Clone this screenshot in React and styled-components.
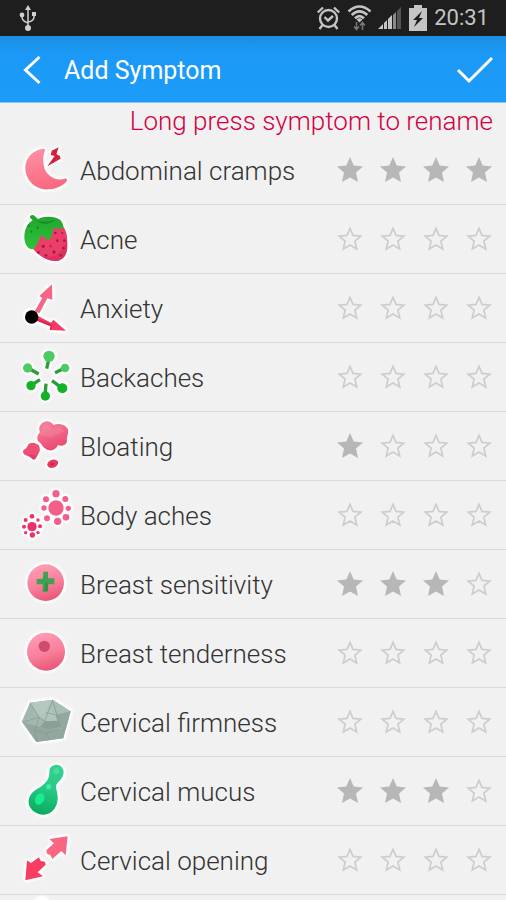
import React, { useState } from "react";
import styled, { createGlobalStyle } from "styled-components";

const GlobalStyle = createGlobalStyle`
  * { box-sizing: border-box; }
  body { margin: 0; background: #f1f1f1; font-family: Roboto, sans-serif; }
`;

const Screen = styled.div`
  display: flex;
  flex-direction: column;
  height: 100vh;
  overflow: hidden;
  background: #f1f1f1;
`;

const StatusBar = styled.div`
  display: flex;
  flex: none;
  align-items: center;
  justify-content: space-between;
  height: 36px;
  padding: 0 17px 0 18px;
  background: #1e1e1e;
  color: #c4c4c4;
`;

const StatusGroup = styled.div`
  display: flex;
  align-items: center;
`;

const Clock = styled.time`
  margin-left: 6px;
  font-size: 22px;
  line-height: 34px;
`;

const Header = styled.header`
  display: flex;
  flex: none;
  align-items: center;
  height: 67px;
  padding: 1px 12px 0 16px;
  background: linear-gradient(#1b8de2, #1c99f6 16px, #1c9bf9);
  border-bottom: 1px solid #8cc6f5;
  color: #fff;
`;

const Title = styled.h1`
  flex: 1;
  margin: 0;
  padding: 2px 0 0 16px;
  font-size: 25px;
  line-height: 32px;
  font-weight: 400;
`;

const IconButton = styled.button`
  display: flex;
  padding: 0;
  border: 0;
  background: none;
  color: inherit;
  cursor: pointer;
`;

const Hint = styled.p`
  flex: none;
  margin: 0;
  padding: 2px 13px 0 0;
  height: 33px;
  font-size: 26px;
  font-weight: 300;
  line-height: 32px;
  text-align: right;
  color: #d4003f;
`;

const List = styled.ul`
  flex: 1;
  min-height: 0;
  margin: 0;
  padding: 0;
  list-style: none;
  overflow-y: auto;
  scrollbar-width: none;
`;

const Row = styled.li`
  display: flex;
  align-items: center;
  height: 69px;
  padding: 0 6px 0 16px;
  border-bottom: 1px solid #dadada;
`;

const Name = styled.span`
  flex: 1;
  padding: 1px 0 0 4px;
  font-size: 26px;
  font-weight: 300;
  line-height: 32px;
  color: #333;
  white-space: nowrap;
`;

const Stars = styled.div`
  display: grid;
  grid-template-columns: repeat(4, 1fr);
  width: 171px;
`;

const StarButton = styled(IconButton)`
  justify-content: center;
  padding: 8px 0;
`;

const SymptomArt = styled.svg`
  flex: none;
  width: 60px;
  height: 68px;
  filter: drop-shadow(0 0 1px #fff) drop-shadow(0 0 1px #fff)
    drop-shadow(0 0 1px #fff) drop-shadow(0 0 1px #fff);
`;

const Gradients = () => (
  <defs>
    <linearGradient id="pink" x1="0" y1="0" x2="0.2" y2="1">
      <stop offset="0" stopColor="#fd93a5" />
      <stop offset="1" stopColor="#f96a82" />
    </linearGradient>
    <linearGradient id="ball" x1="0.3" y1="0" x2="0.6" y2="1">
      <stop offset="0" stopColor="#ff9eb6" />
      <stop offset="0.55" stopColor="#f8809b" />
      <stop offset="1" stopColor="#ea5377" />
    </linearGradient>
    <linearGradient id="rose" x1="0.2" y1="0" x2="0.6" y2="1">
      <stop offset="0" stopColor="#f5849c" />
      <stop offset="1" stopColor="#ea4670" />
    </linearGradient>
    <linearGradient id="leaf" x1="0" y1="0" x2="0" y2="1">
      <stop offset="0" stopColor="#1fa52d" />
      <stop offset="1" stopColor="#2fc23a" />
    </linearGradient>
    <linearGradient id="slime" x1="0.6" y1="0" x2="0.4" y2="1">
      <stop offset="0" stopColor="#35d292" />
      <stop offset="0.5" stopColor="#23c983" />
      <stop offset="1" stopColor="#0caa5e" />
    </linearGradient>
  </defs>
);

const Cramps = () => (
  <>
    <path fill="url(#pink)" d="M131 38C118 39 105 44 94 54C77 70 71 94 80 118C90 148 119 163 149 160C174 157 193 146 201 134C203 129 198 126 193 128C175 135 149 126 137 105C128 88 128 63 134 46C136 41 135 38 131 38Z" />
    <path fill="#d8223c" d="M176 34L155 44L152 57L164 60L142 91L182 68L180 60L169 55Z" />
    <path fill="none" stroke="#c01d38" strokeWidth="3" d="M162 48L173 61L152 80" />
  </>
);

const Strawberry = () => (
  <>
    <path fill="#ec3e68" d="M96 66C88 83 90 113 100 133C117 155 151 173 177 167C197 160 203 140 202 119C203 94 199 75 188 63C158 54 120 52 96 66Z" />
    <path fill="#d52858" opacity="0.6" d="M185 162C201 151 203 132 200 105C190 145 158 164 125 151C140 168 164 173 185 162Z" />
    <path fill="url(#leaf)" d="M98 46L90 38C88 30 99 28 104 33L114 42C130 34 163 32 181 45C188 53 193 65 188 71C181 73 172 68 164 68C154 78 157 96 149 104C139 108 132 96 124 91C116 105 113 123 98 133C83 134 73 116 73 96C73 72 84 54 98 46Z" />
    <g fill="#127a24">
      <circle cx="113" cy="68" r="3" /><circle cx="94" cy="80" r="3" /><circle cx="86" cy="62" r="3" />
      <path d="M108 46C129 55 154 46 169 46L148 55C134 60 119 55 108 46Z" opacity="0.55" />
    </g>
    <g fill="#922447">
      <circle cx="130" cy="124" r="5" /><circle cx="172" cy="107" r="4" /><circle cx="166" cy="84" r="4" />
      <circle cx="193" cy="107" r="4" /><circle cx="190" cy="129" r="4" /><circle cx="162" cy="141" r="5" />
      <circle cx="138" cy="151" r="4" /><circle cx="115" cy="142" r="4" /><circle cx="182" cy="151" r="4" />
      <circle cx="152" cy="124" r="3" /><circle cx="187" cy="84" r="3" />
    </g>
  </>
);

const Vectors = () => (
  <>
    <path fill="#f66585" d="M104 112L127 72L118 66L156 31L157 77L142 73L118 118Z" />
    <path fill="#f43b65" d="M108 123L153 146L160 137L198 170L149 168L152 157L106 139Z" />
    <path fill="#de2450" d="M108 132L154 151L155 165L149 168L152 157L106 138Z" />
    <circle cx="95" cy="129" r="20" fill="#000" />
  </>
);

const Burst = () => (
  <>
    <g stroke="#2e9b3b" strokeWidth="10">
      <path d="M147 46L140 77" /><path d="M84 75L116 93" /><path d="M195 75L165 89" />
      <path d="M92 128L120 110" /><path d="M135 158L138 122" /><path d="M187 136L156 113" />
    </g>
    <g fill="#4ecb60">
      <circle cx="147" cy="40" r="17" /><circle cx="83" cy="75" r="14" /><circle cx="195" cy="75" r="13" />
    </g>
    <g fill="#13b325">
      <circle cx="93" cy="128" r="14" /><circle cx="136" cy="159" r="14" /><circle cx="187" cy="136" r="15" />
    </g>
  </>
);

const Blobs = () => (
  <>
    <path fill="url(#rose)" d="M124 35C134 24 153 25 161 39C175 31 199 38 204 52C207 67 198 75 201 86C201 99 184 104 174 99C168 114 151 120 138 111C125 104 127 97 118 91C109 84 110 70 120 61C116 52 117 42 124 35Z" />
    <path fill="#fbadbd" opacity="0.2" d="M125 48C136 35 151 40 158 51C171 43 187 46 192 60C174 63 167 75 151 77C140 70 127 71 119 69C118 62 124 61 125 48Z" />
    <path fill="#ec5076" d="M86 96Q95 90 104 93L116 99Q121 108 119 118L111 132Q108 143 101 143L90 135L74 128Q67 122 70 115L79 108Z" />
    <path fill="#d9365f" opacity="0.7" d="M88 127L108 131L117 120L111 132L101 143L90 135Z" />
    <ellipse cx="158" cy="155" rx="17" ry="12" transform="rotate(-20 158 155)" fill="#e63963" />
    <ellipse cx="156" cy="156" rx="7" ry="4" transform="rotate(-20 156 156)" fill="#cd2854" />
  </>
);

const Cells = () => (
  <>
    <g fill="#f1608b">
      <circle cx="168" cy="81" r="23" /><circle cx="168" cy="38" r="11" /><circle cx="138" cy="55" r="9" />
      <circle cx="196" cy="54" r="9" /><circle cx="132" cy="81" r="8" /><circle cx="205" cy="82" r="8" />
      <circle cx="141" cy="112" r="9" /><circle cx="198" cy="109" r="10" /><circle cx="173" cy="121" r="11" />
    </g>
    <g fill="#ea3267">
      <circle cx="96" cy="137" r="14" /><circle cx="96" cy="106" r="7" /><circle cx="77" cy="117" r="6" />
      <circle cx="114" cy="117" r="5" /><circle cx="72" cy="137" r="6" /><circle cx="120" cy="136" r="6" />
      <circle cx="77" cy="155" r="5" /><circle cx="97" cy="162" r="8" /><circle cx="114" cy="155" r="5" />
    </g>
  </>
);

const PlusBall = () => (
  <>
    <circle cx="137" cy="98" r="55" fill="url(#ball)" />
    <path fill="#3fa151" d="M130 65H144V85H163V103H145L144 124L128 125V103H110V87L129 86Z" />
    <path fill="#2c863e" d="M137 94L144 102V124L128 125L134 119Z" opacity="0.6" />
  </>
);

const DotBall = () => (
  <>
    <circle cx="138" cy="98" r="57" fill="url(#ball)" />
    <circle cx="133" cy="82" r="17" fill="#cf4c71" />
  </>
);

const Rock = () => (
  <>
    <path fill="#a3b7af" d="M90 44L158 35L212 70L190 151L109 162L65 101Z" />
    <path fill="#b4c8c0" d="M90 44L158 35L138 74L118 88Z" />
    <path fill="#a9bfb6" d="M158 35L212 70L166 80L152 58Z" />
    <path fill="#b0c5bc" d="M138 74L152 58L166 80L174 98L134 100L118 88Z" />
    <path fill="#94a89f" d="M166 80L212 70L196 128L180 116Z" />
    <path fill="#8a9f96" d="M134 100L174 98L180 116L148 126L120 116Z" />
    <path fill="#93a79f" d="M70 104L120 116L148 126L196 122L190 151L109 162Z" />
    <path fill="none" stroke="#82978e" strokeWidth="2" d="M90 44L118 88L70 102M134 100L158 37L182 118M118 88L134 100M138 74L166 80M182 118L138 137L104 126M118 88L104 126L111 160M138 137L150 155" />
  </>
);

const Drop = () => (
  <>
    <path fill="url(#slime)" d="M151 32C162 18 184 20 190 39C194 58 180 70 170 81C164 91 175 107 173 128C170 157 150 174 127 173C103 171 83 152 86 130C88 112 103 99 121 90C142 77 148 61 148 48C148 40 148 37 151 32Z" />
    <ellipse cx="119" cy="126" rx="13" ry="18" transform="rotate(30 119 126)" fill="#14ee8c" />
    <circle cx="146" cy="89" r="8" fill="#43e4a5" />
    <circle cx="169" cy="42" r="9" fill="#55dda6" opacity="0.7" />
  </>
);

const Opening = () => (
  <>
    <path fill="#fa6681" d="M203 31L197 88L184 75L157 99L151 87L141 83L139 73L162 52L148 39Z" />
    <path fill="#f83d61" d="M76 163L81 103L93 111L117 94L122 105L135 107L137 116L113 139L129 151Z" />
  </>
);

const Peek = () => <ellipse cx="126" cy="28" rx="18" ry="20" fill="#fff" />;

const symptoms = [
  { name: "Abdominal cramps", rating: 4, Art: Cramps },
  { name: "Acne", rating: 0, Art: Strawberry },
  { name: "Anxiety", rating: 0, Art: Vectors },
  { name: "Backaches", rating: 0, Art: Burst },
  { name: "Bloating", rating: 1, Art: Blobs },
  { name: "Body aches", rating: 0, Art: Cells },
  { name: "Breast sensitivity", rating: 3, Art: PlusBall },
  { name: "Breast tenderness", rating: 0, Art: DotBall },
  { name: "Cervical firmness", rating: 0, Art: Rock },
  { name: "Cervical mucus", rating: 3, Art: Drop },
  { name: "Cervical opening", rating: 0, Art: Opening },
];

const Picture = ({ Art }) => (
  <SymptomArt viewBox="48 0 180 204" aria-hidden="true">
    <Gradients />
    <Art />
  </SymptomArt>
);

const Star = ({ filled }) => (
  <svg width="28" height="28" viewBox="0 0 28 28" aria-hidden="true">
    {filled ? (
      <path fill="#b7b7b7" d="M14 1L17.7 9.5L27 10.4L20 16.4L22 26L14 21.6L6 26L8 16.4L1 10.4L10.3 9.5Z" />
    ) : (
      <path fill="none" stroke="#cdcdcd" strokeWidth="1.7" d="M14 3.4L17 10.4L24.8 11.1L18.9 16.1L20.7 24L14 20.1L7.3 24L9.1 16.1L3.2 11.1L11 10.4Z" />
    )}
  </svg>
);

function SymptomRow({ name, rating, Art }) {
  const [value, setValue] = useState(rating);
  return (
    <Row>
      <Picture Art={Art} />
      <Name>{name}</Name>
      <Stars role="group" aria-label={name}>
        {[1, 2, 3, 4].map((n) => (
          <StarButton
            key={n}
            type="button"
            aria-label={`${name}: ${n}`}
            aria-pressed={n <= value}
            onClick={() => setValue(n === value ? 0 : n)}
          >
            <Star filled={n <= value} />
          </StarButton>
        ))}
      </Stars>
    </Row>
  );
}

const UsbIcon = () => (
  <svg width="20" height="28" viewBox="0 0 20 28" fill="none" stroke="#cfcfcf" strokeWidth="1.5" aria-hidden="true">
    <path d="M10 3V23M4 11V13Q4 17 10 19M16 10V13Q16 17 10 18" />
    <g fill="#cfcfcf" stroke="none">
      <path d="M10 1L13 6H7Z" /><circle cx="10" cy="24" r="3" />
      <circle cx="4" cy="11" r="2.4" /><path d="M14 8H18V12H14Z" />
    </g>
  </svg>
);

const AlarmIcon = () => (
  <svg width="25" height="26" viewBox="0 0 25 26" fill="none" stroke="#c4c4c4" strokeWidth="2.4" aria-hidden="true">
    <circle cx="12.5" cy="13.5" r="8.5" />
    <path d="M8.500 12L12 15.500L17 11M1.800 7.500L7 2.500M18 2.500L23.200 7.500M6.500 20L3.500 24M18.500 20L21.500 24" />
  </svg>
);

const WifiIcon = () => (
  <svg width="25" height="28" viewBox="0 0 25 28" fill="none" stroke="#c4c4c4" strokeWidth="2.6" aria-hidden="true">
    <path d="M1.500 7.500Q12.500 -2.500 23.500 7.500M4.700 11Q12.500 3.800 20.300 11M8 14.300Q12.500 10 17 14.300" />
    <path fill="#c4c4c4" stroke="none" d="M9.500 15.500Q12.500 13 15.500 15.500L12.500 18.500Z" />
    <path stroke="#777" strokeWidth="1.5" d="M9.500 18V25M7 22.500L9.500 25.500L12 22.500M15.500 26V19M13 21.500L15.500 18.500L18 21.500" />
  </svg>
);

const SignalIcon = () => (
  <svg width="24" height="24" viewBox="0 0 24 24" aria-hidden="true">
    <path fill="#c4c4c4" d="M0 23L5 18V23ZM6 17L9 14V23H6ZM10 13L14 9V23H10Z" />
    <path fill="#8a8a8a" d="M15 9L18 6V23H15Z" /><path fill="#555" d="M19 5L23 1V23H19Z" />
  </svg>
);

const BatteryIcon = () => (
  <svg width="20" height="28" viewBox="0 0 20 28" aria-hidden="true">
    <path fill="#c4c4c4" d="M6 1H14V4H19V27H1V4H6Z" />
    <path fill="#1e1e1e" d="M14 7L5 16H9L6 23L15 14H11Z" />
  </svg>
);

const StatusIcons = styled.div`
  display: flex;
  align-items: center;
  gap: 6px;
`;

export default function App() {
  return (
    <>
      <GlobalStyle />
      <Screen>
        <StatusBar>
          <UsbIcon />
          <StatusGroup>
            <StatusIcons>
              <AlarmIcon />
              <WifiIcon />
              <SignalIcon />
              <BatteryIcon />
            </StatusIcons>
            <Clock>20:31</Clock>
          </StatusGroup>
        </StatusBar>
        <Header>
          <IconButton type="button" aria-label="Back">
            <svg width="32" height="36" viewBox="0 0 32 36" fill="none" stroke="currentColor" strokeWidth="3" aria-hidden="true">
              <path d="M23.500 5L9.500 18L23.500 31" />
            </svg>
          </IconButton>
          <Title>Add Symptom</Title>
          <IconButton type="button" aria-label="Save">
            <svg width="38" height="32" viewBox="0 0 38 32" fill="none" stroke="currentColor" strokeWidth="3" aria-hidden="true">
              <path d="M2 16L13 27L36 4" />
            </svg>
          </IconButton>
        </Header>
        <Hint>Long press symptom to rename</Hint>
        <List>
          {symptoms.map((s) => (
            <SymptomRow key={s.name} {...s} />
          ))}
          <Row>
            <Picture Art={Peek} />
          </Row>
        </List>
      </Screen>
    </>
  );
}
